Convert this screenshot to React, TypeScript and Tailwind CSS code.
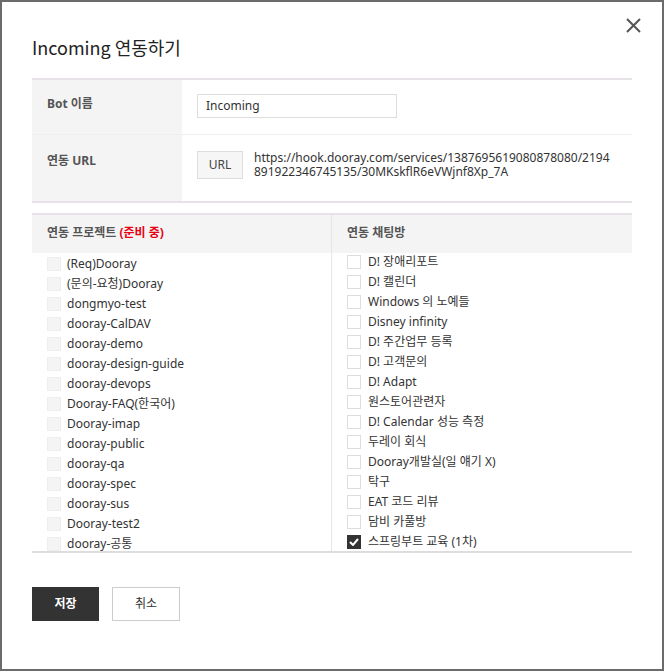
import React from "react";

const left = [
  "(Req)Dooray",
  "(문의-요청)Dooray",
  "dongmyo-test",
  "dooray-CalDAV",
  "dooray-demo",
  "dooray-design-guide",
  "dooray-devops",
  "Dooray-FAQ(한국어)",
  "Dooray-imap",
  "dooray-public",
  "dooray-qa",
  "dooray-spec",
  "dooray-sus",
  "Dooray-test2",
  "dooray-공통",
];

const right = [
  "D! 장애리포트",
  "D! 캘린더",
  "Windows 의 노예들",
  "Disney infinity",
  "D! 주간업무 등록",
  "D! 고객문의",
  "D! Adapt",
  "원스토어관련자",
  "D! Calendar 성능 측정",
  "두레이 회식",
  "Dooray개발실(일 얘기 X)",
  "탁구",
  "EAT 코드 리뷰",
  "담비 카풀방",
  "스프링부트 교육 (1차)",
];

export default function App() {
  return (
    <div
      className="w-[664px] h-[671px] bg-[#6b6b6b] pt-[2px] pl-[2px] pr-[2px] pb-[2px] overflow-hidden"
      style={{ fontFamily: '"Noto Sans", "Noto Sans CJK KR", sans-serif' }}
    >
      <div className="relative w-full h-full bg-white px-[30px] text-[#333]">
        <button className="absolute right-[20px] top-[14px] w-[18px] h-[18px] flex items-center justify-center">
          <svg width="15" height="15" viewBox="0 0 15 15">
            <path d="M1 1 L14 14 M14 1 L1 14" stroke="#555" strokeWidth="2" />
          </svg>
        </button>
        <h1 className="pt-[33px] h-[76px] text-[18px] leading-[24px] text-[#222]" style={{ fontFamily: '"Noto Sans CJK KR", sans-serif' }}>
          Incoming 연동하기
        </h1>

        <div className="border-t-2 border-b-2 border-[#e6e2e8]">
          <div className="flex h-[55px] border-b border-[#eeeeee]">
            <div className="w-[150px] bg-[#f4f4f4] pl-[15px] pt-[15px] text-[12px] font-bold text-[#555]">
              Bot 이름
            </div>
            <div className="flex-1 pl-[15px] pt-[14px]">
              <div className="w-[200px] h-[24px] border border-[#dddddd] pl-[8px] text-[12px] leading-[22px] text-[#333]">
                Incoming
              </div>
            </div>
          </div>
          <div className="flex h-[66px]">
            <div className="w-[150px] bg-[#f4f4f4] pl-[15px] pt-[17px] text-[12px] font-bold text-[#555]">
              연동 URL
            </div>
            <div className="flex-1 pl-[15px] pt-[16px] flex gap-[11px]">
              <div className="w-[46px] h-[28px] shrink-0 border border-[#dddddd] bg-[#f6f6f6] text-[12px] flex items-center justify-center text-[#444]">
                URL
              </div>
              <div className="text-[12px] leading-[14px] text-[#333] break-all w-[358px]">
                https://hook.dooray.com/services/1387695619080878080/2194891922346745135/30MKskflR6eVWjnf8Xp_7A
              </div>
            </div>
          </div>
        </div>

        <div className="mt-[10px] border-t-2 border-[#e6e2e8] border-b-2 border-b-[#dddddd] flex">
          <div className="w-[300px] border-r border-[#e6e6e6]">
            <div className="h-[38px] bg-[#f4f4f4] pl-[15px] pb-[2px] flex items-center text-[12px] font-bold text-[#555]">
              연동 프로젝트&nbsp;<span className="text-[#e60012]">(준비 중)</span>
            </div>
            <div className="h-[298px] overflow-hidden pt-[1px]">
              {left.map((t) => (
                <div key={t} className="h-[20px] flex items-center pl-[15px]">
                  <span className="w-[14px] h-[14px] border border-[#eeeeee] bg-[#f4f4f4] mr-[6px] shrink-0" />
                  <span className="text-[12px] text-[#333]">{t}</span>
                </div>
              ))}
            </div>
          </div>
          <div className="flex-1">
            <div className="h-[38px] bg-[#f4f4f4] pl-[15px] pb-[2px] flex items-center text-[12px] font-bold text-[#555]">
              연동 채팅방
            </div>
            <div className="h-[298px] overflow-hidden -mt-[1px]">
              {right.map((t, i) => (
                <div key={t} className="h-[20px] flex items-center pl-[15px]">
                  {i === right.length - 1 ? (
                    <span className="w-[14px] h-[14px] bg-[#333] mr-[7px] shrink-0 flex items-center justify-center">
                      <svg width="10" height="8" viewBox="0 0 10 8">
                        <path d="M1 4 L4 7 L9 1" stroke="white" strokeWidth="2" fill="none" />
                      </svg>
                    </span>
                  ) : (
                    <span className="w-[14px] h-[14px] border border-[#dddddd] bg-white mr-[7px] shrink-0" />
                  )}
                  <span className="text-[12px] text-[#333]">{t}</span>
                </div>
              ))}
            </div>
          </div>
        </div>

        <div className="mt-[34px] flex gap-[13px]">
          <button className="w-[67px] h-[34px] bg-[#333333] text-white text-[12px] font-bold">
            저장
          </button>
          <button className="w-[68px] h-[34px] border border-[#cccccc] bg-white text-[#333] text-[12px]">
            취소
          </button>
        </div>
      </div>
    </div>
  );
}
